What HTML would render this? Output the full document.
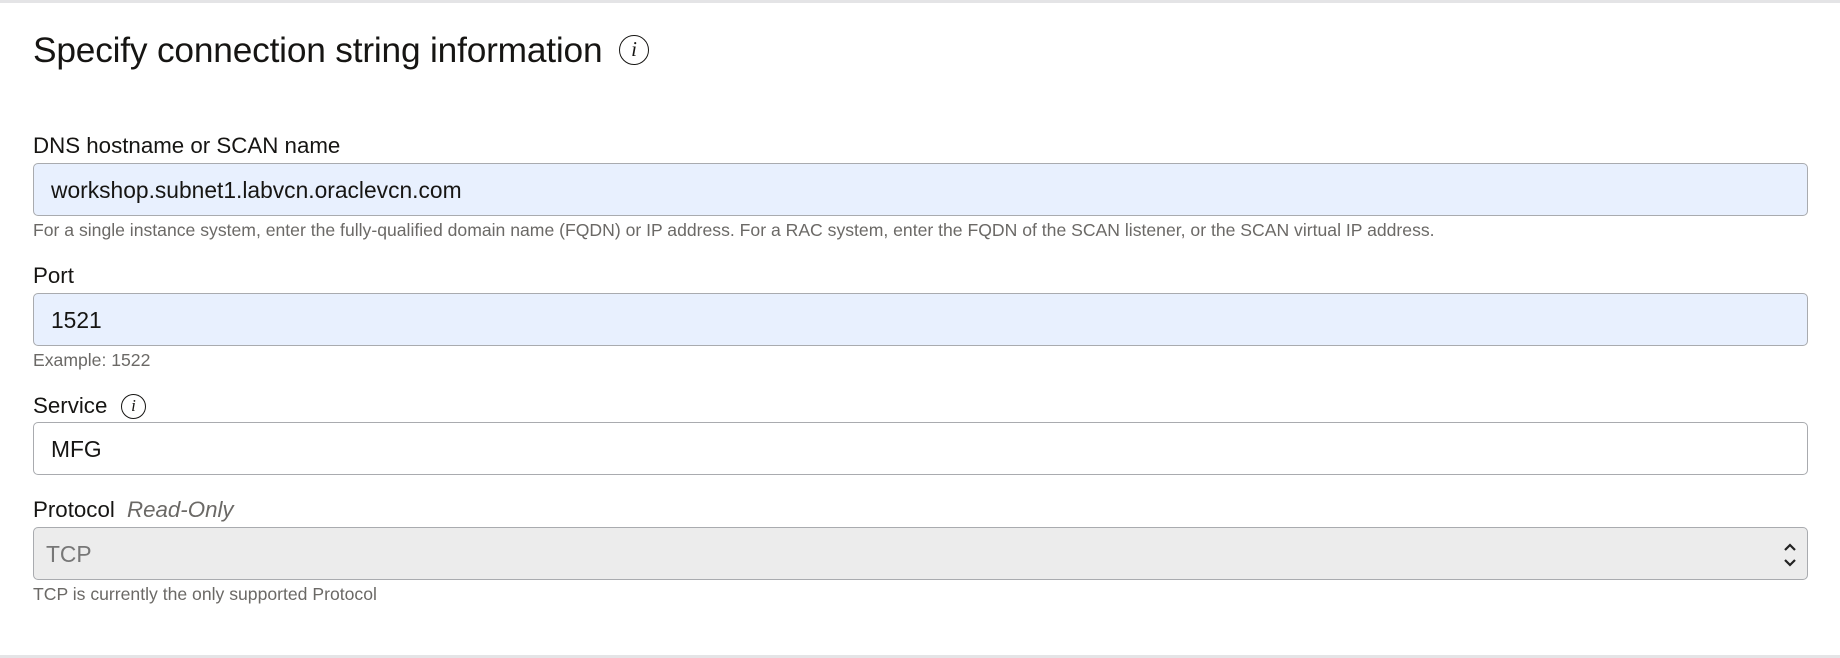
<!DOCTYPE html>
<html><head><style>
body{margin:0;width:1840px;height:658px;background:#fff;font-family:"Liberation Sans",Arial,sans-serif;color:#161513;position:relative;overflow:hidden}
.a{position:absolute}
.top{left:0;top:0;width:1840px;height:3px;background:#e4e4e6}
.bot{left:0;top:655px;width:1840px;height:3px;background:#e4e4e6}
h1{position:absolute;left:33px;top:29px;margin:0;font-weight:normal;font-size:35.3px;line-height:44px;letter-spacing:-0.2px}
.lab{left:33px;font-size:22.3px;line-height:26px}
.inp{left:33px;width:1773px;height:51px;border:1.5px solid #a9abaf;border-radius:5px;box-sizing:content-box}
.inp span{position:absolute;left:17px;top:13px;font-size:22.8px;line-height:26px}
.help{left:33px;font-size:17.6px;line-height:20px;color:#6b6966}
.ic{border:1.8px solid #161513;border-radius:50%;box-sizing:border-box;text-align:center;font-family:"Liberation Serif",serif;font-style:italic}
</style></head><body>
<div class="a top"></div>
<h1>Specify connection string information</h1>
<div class="a ic" style="left:619px;top:35px;width:30px;height:30px;font-size:21px;line-height:27px">i</div>

<div class="a lab" style="top:133px">DNS hostname or SCAN name</div>
<div class="a inp" style="top:163px;background:#e8f0fe"><span>workshop.subnet1.labvcn.oraclevcn.com</span></div>
<div class="a help" style="top:220px">For a single instance system, enter the fully-qualified domain name (FQDN) or IP address. For a RAC system, enter the FQDN of the SCAN listener, or the SCAN virtual IP address.</div>

<div class="a lab" style="top:263px">Port</div>
<div class="a inp" style="top:293px;background:#e8f0fe"><span>1521</span></div>
<div class="a help" style="top:350px">Example: 1522</div>

<div class="a lab" style="top:393px">Service</div>
<div class="a ic" style="left:121px;top:394px;width:25px;height:25px;font-size:17px;line-height:22px">i</div>
<div class="a inp" style="top:422px;background:#fff"><span>MFG</span></div>

<div class="a lab" style="top:497px">Protocol <i style="color:#6b6966;margin-left:6px">Read-Only</i></div>
<div class="a inp" style="top:527px;background:#ececec"><span style="left:12px;color:#777">TCP</span>
<svg class="a" style="left:1748px;top:13px" width="16" height="28" viewBox="0 0 16 28"><path d="M3 9l5-5 5 5M3 19l5 5 5-5" fill="none" stroke="#222" stroke-width="2.2"/></svg></div>
<div class="a help" style="top:584px">TCP is currently the only supported Protocol</div>
<div class="a bot"></div>
</body></html>
